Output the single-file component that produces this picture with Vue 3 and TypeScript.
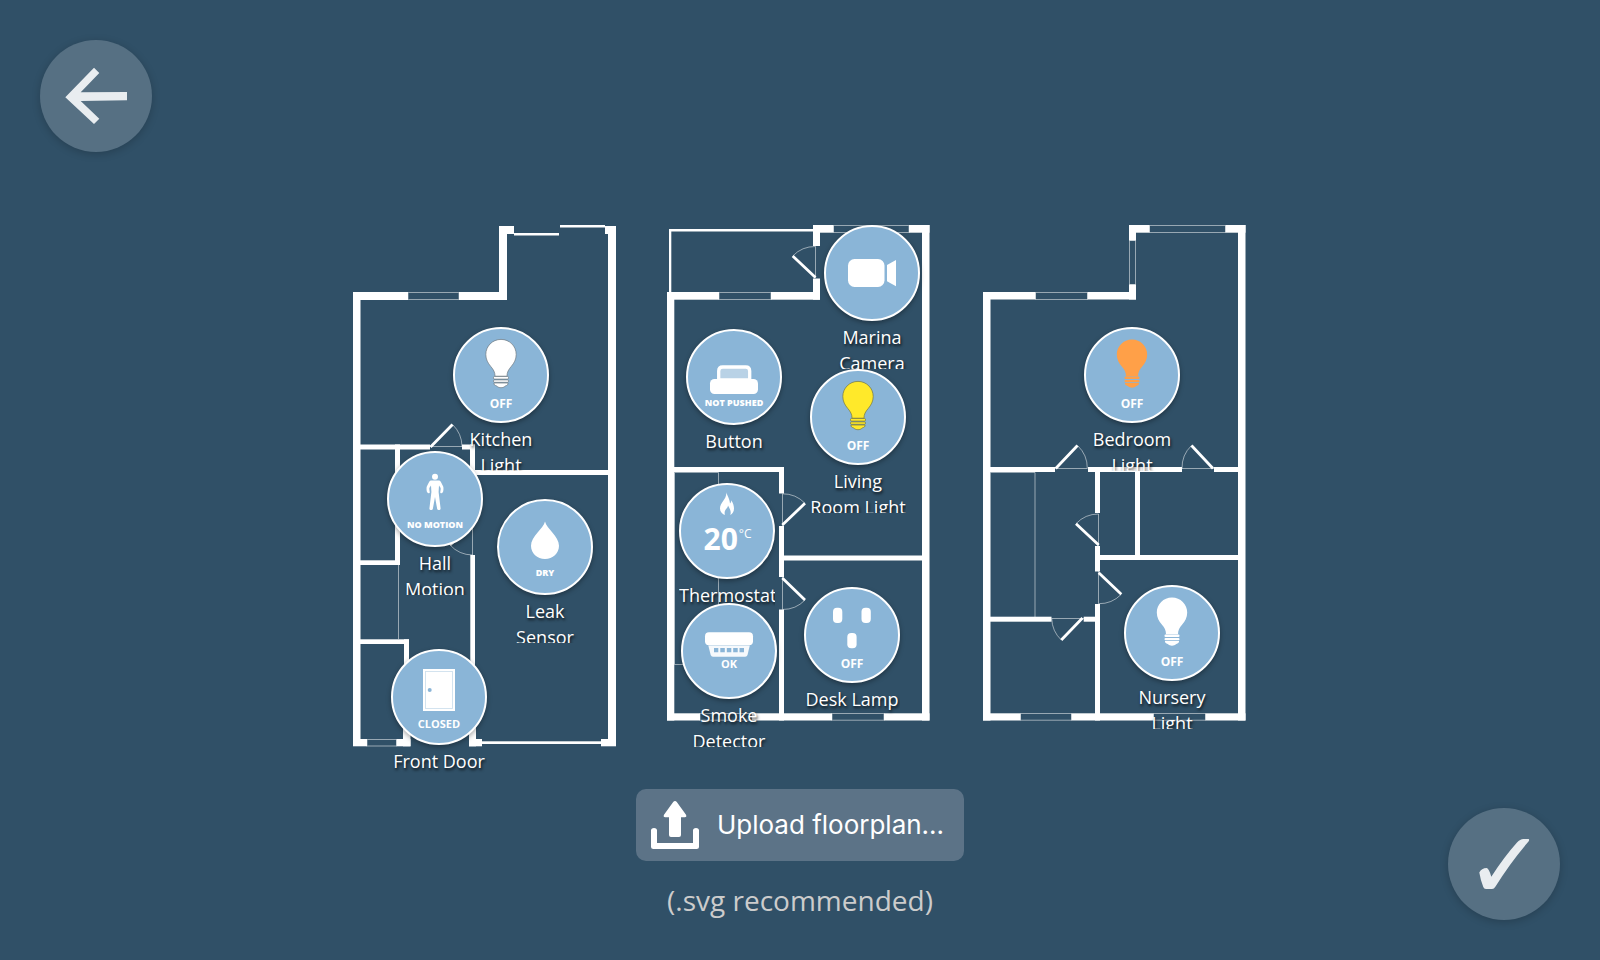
<script setup lang="ts">
type Box = [number, number, number, number]
type IconName = 'bulb' | 'motion' | 'drop' | 'door' | 'camera' | 'button' | 'flame' | 'smoke' | 'outlet'

interface Accessory {
  name: string
  icon: IconName
  x: number
  y: number
  state?: string
  size?: 'large' | 'medium' | 'small' | 'raised'
  fill?: string
  outline?: string
}

// Plan coordinates: origin and extent of the drawing's viewBox.
const plan = { x: 354, y: 225, width: 892, height: 522 }

// Solid walls as [left, top, right, bottom].
const walls: Box[] = [
  // ground floor
  [353, 292, 408, 300], [459, 292, 507, 300], [499, 226, 507, 300], [499, 226, 514, 234],
  [605, 226, 616, 234], [608, 226, 616, 746], [514, 233, 559, 235.5], [560, 225, 605, 227.5],
  [353, 292, 360.5, 746], [360, 444.5, 430, 449.5], [462, 444.5, 475, 449.5],
  [470, 444.5, 475, 475], [470, 470, 616, 475], [395, 444.5, 400, 565], [360, 560.3, 400, 565],
  [360, 639.3, 409, 644], [404, 639.3, 409, 740], [403, 726, 410.5, 746.3],
  [353, 739, 367, 746.3], [396.5, 739, 410.5, 746.3], [470.3, 555, 475, 740],
  [469, 726, 476, 746.3], [469, 739, 482, 746.3], [482, 741.3, 601, 744], [601, 739, 616, 746.3],
  // first floor
  [667, 292, 719, 299.7], [771, 292, 820, 299.7], [667, 292, 674.3, 720.5],
  [669, 229, 671.3, 292], [669, 229, 813, 231.5], [813, 225, 820, 246], [813, 278.5, 820, 299.7],
  [813, 225, 833.5, 232.7], [909, 225, 929.5, 232.7], [922, 225, 929.5, 720.5],
  [674, 467, 784, 472], [779, 467, 784, 493.5], [779, 526, 784, 577], [779, 609.5, 784, 720.5],
  [779, 555.5, 922, 560.5], [667, 713.3, 700, 720.5], [752, 713.3, 832, 720.5],
  [884, 713.3, 929.5, 720.5],
  // second floor
  [983, 292, 1035.5, 299.5], [1087.5, 292, 1136, 299.5], [983, 292, 990.5, 720.5],
  [1129, 225, 1136, 240.5], [1129, 284.5, 1136, 299.5], [1129, 225, 1149.5, 232.7],
  [1225.5, 225, 1245.5, 232.7], [1238, 225, 1245.5, 720.5],
  [990, 467, 1055, 472], [1088, 467, 1182, 472], [1214, 467, 1245, 472],
  [1095, 467, 1100, 513], [1095, 546, 1100, 571.5], [1095, 604, 1100, 720.5],
  [1135, 467, 1140, 560], [1095, 555, 1245, 560], [990, 616.7, 1051.5, 621.7],
  [1083.7, 616.7, 1100, 621.7], [983, 713.3, 1020.5, 720.5], [1071.5, 713.3, 1153.5, 720.5],
  [1205.5, 713.3, 1245.5, 720.5],
]

// Windows are drawn as hairline frames between two wall ends.
const windows: Box[] = [
  [408, 292.5, 459, 299.5], [367, 739.5, 396.5, 746],
  [719, 292.5, 771, 299.5], [833.5, 225.5, 909, 232.5], [700, 713.5, 752, 720.2], [832, 713.5, 884, 720.2],
  [1035.5, 292.5, 1087.5, 299.5], [1149.5, 225.5, 1225.5, 232.5], [1129.5, 240.5, 1135.5, 284.5],
  [1020.5, 713.5, 1071.5, 720.2], [1153.5, 713.5, 1205.5, 720.2],
]

const doorLeaves = [
  'M430.5 447L452.5 424.5', 'M472.5 524L450 545',
  'M815.5 277.5L792.7 256', 'M782.3 525L805 503.3', 'M782.3 578L805 600',
  'M1055.7 468.5L1077.5 445.5', 'M1213 468.5L1191.5 445.5', 'M1098.7 545L1076 523.7',
  'M1098.7 572.7L1121.3 594.3', 'M1082.5 618L1061.3 640',
].join('')

const hairlines = [
  'M430 446.5H462A31 31 0 0 0 452.5 424.5', 'M472.5 475V555A31 31 0 0 1 450 545',
  'M398.5 565V639',
  'M815.5 278V246.5A31 31 0 0 0 792.7 256', 'M782.5 526V493.8A31 31 0 0 1 805 503.3',
  'M782.5 577V609.5A31 31 0 0 0 805 600',
  'M674.5 472.5H718.5V664.5H674.5Z',
  'M1055 468.5H1087.3A31 31 0 0 0 1077.5 445.5', 'M1214 468.5H1182A31 31 0 0 1 1191.5 445.5',
  'M1098.5 546V514A31 31 0 0 0 1076 523.7', 'M1098.5 571V603.7A31 31 0 0 0 1121.3 594.3',
  'M1084 618.5H1051.7A31 31 0 0 0 1061.3 640',
  'M990.5 472.5H1035V617',
].join('')

const accessories: Accessory[] = [
  { name: 'Kitchen Light', icon: 'bulb', x: 501, y: 375, state: 'OFF', size: 'large', fill: '#ffffff', outline: '#6f7880' },
  { name: 'Hall Motion', icon: 'motion', x: 435, y: 499, state: 'NO MOTION', size: 'small' },
  { name: 'Leak Sensor', icon: 'drop', x: 545, y: 547, state: 'DRY', size: 'small' },
  { name: 'Front Door', icon: 'door', x: 439, y: 697, state: 'CLOSED', size: 'medium' },
  { name: 'Marina Camera', icon: 'camera', x: 872, y: 273 },
  { name: 'Button', icon: 'button', x: 734, y: 377, state: 'NOT PUSHED', size: 'small' },
  { name: 'Living Room Light', icon: 'bulb', x: 858, y: 417, state: 'OFF', size: 'large', fill: '#ffe92a', outline: '#77773c' },
  { name: 'Thermostat', icon: 'flame', x: 727, y: 531 },
  { name: 'Smoke Detector', icon: 'smoke', x: 729, y: 651, state: 'OK', size: 'raised' },
  { name: 'Desk Lamp', icon: 'outlet', x: 852, y: 635, state: 'OFF', size: 'large' },
  { name: 'Bedroom Light', icon: 'bulb', x: 1132, y: 375, state: 'OFF', size: 'large', fill: '#ffa048' },
  { name: 'Nursery Light', icon: 'bulb', x: 1172, y: 633, state: 'OFF', size: 'large', fill: '#ffffff' },
]

const place = (a: Accessory) => ({
  left: `${((a.x - plan.x) / plan.width) * 100}%`,
  top: `${((a.y - plan.y) / plan.height) * 100}%`,
})
</script>

<template>
  <main class="page">
    <button class="round back" type="button" aria-label="Back">
      <svg viewBox="0 0 112 112" aria-hidden="true">
        <path d="M25.3 57.3L54 27.7L59.3 33L40.7 52.3L87 52V60.3L40.7 61L59.3 78.7L54 84Z" />
      </svg>
    </button>

    <section class="content">
      <div class="plan">
        <svg class="drawing" :viewBox="`${plan.x} ${plan.y} ${plan.width} ${plan.height}`" aria-hidden="true">
          <path class="hairline" :d="hairlines" />
          <rect
            v-for="(w, i) in windows" :key="`window-${i}`" class="hairline"
            :x="w[0]" :y="w[1]" :width="w[2] - w[0]" :height="w[3] - w[1]"
          />
          <rect
            v-for="(w, i) in walls" :key="`wall-${i}`" class="wall"
            :x="w[0]" :y="w[1]" :width="w[2] - w[0]" :height="w[3] - w[1]"
          />
          <path class="leaf" :d="doorLeaves" />
        </svg>

        <div v-for="a in accessories" :key="a.name" class="accessory" :style="place(a)">
          <button class="disc" type="button" :aria-label="a.name">
            <svg class="icon" viewBox="2 2 92 92" aria-hidden="true">
              <g v-if="a.icon === 'bulb'" :fill="a.fill" :stroke="a.outline ?? 'none'" stroke-width="0.7">
                <path d="M48 12.4C39.400 12.400 32.800 19.200 32.800 27.500C32.800 32.500 35 36.200 37.800 39.500C40.500 42.700 42 45.200 42 49.200H54C54 45.200 55.500 42.700 58.200 39.500C61 36.200 63.200 32.500 63.200 27.500C63.200 19.200 56.600 12.400 48 12.400Z" />
                <rect x="40.500" y="49.500" width="15" height="2.600" rx="1" />
                <rect x="40.500" y="52.900" width="15" height="2.400" rx="1" />
                <path d="M41 56H55C55.500 57.600 54 58.400 52.300 59C51 60.300 49.600 60.700 48 60.700S45 60.300 43.700 59C42 58.400 40.500 57.600 41 56Z" />
              </g>
              <g v-else-if="a.icon === 'motion'" fill="#fff">
                <circle cx="48" cy="25.700" r="3" />
                <path d="M44.500 29.500H51.500C52.500 29.500 53.200 30 53.800 30.800L56.200 35.500C56.700 37 56.500 40 55.800 41.300C55 42.600 53.300 42.500 53.200 41.200C53.400 39.500 54 38 53.500 36.800L52 34.500L51.600 41L53.600 57.500C53.600 59.300 50.800 59.700 50.200 58L48 46L45.800 58C45.200 59.700 42.400 59.300 42.400 57.500L44.400 41L44 34.500L42.500 36.800C42 38 42.600 39.500 42.800 41.200C42.700 42.500 41 42.600 40.200 41.300C39.500 40 39.300 37 39.800 35.500L42.200 30.800C42.800 30 43.500 29.500 44.500 29.500Z" />
              </g>
              <path v-else-if="a.icon === 'drop'" fill="#fff" d="M48 22.500C49.500 29.500 62 37.500 62 46.800C62 54.200 55.800 60 48 60S34 54.200 34 46.800C34 37.500 46.500 29.500 48 22.500Z" />
              <g v-else-if="a.icon === 'door'">
                <rect x="32" y="20" width="32" height="42" fill="#fff" />
                <rect x="34.500" y="22.500" width="27" height="37" fill="none" stroke="#cfe0ee" stroke-width="0.900" />
                <circle cx="38.700" cy="41" r="2" fill="#8ab5d7" />
              </g>
              <g v-else-if="a.icon === 'camera'" fill="#fff">
                <rect x="24" y="34" width="36.500" height="28" rx="6.500" />
                <path d="M63 40L72 35V61.300L63 56.300Z" />
              </g>
              <g v-else-if="a.icon === 'button'" fill="#fff">
                <path d="M32.700 51V42Q32.700 38 36.700 38H59.700Q63.700 38 63.700 42V51Z" fill="#b9d2e6" stroke="#fff" stroke-width="3.300" />
                <rect x="24" y="50" width="48" height="15" rx="4.500" />
              </g>
              <path v-else-if="a.icon === 'flame'" fill="#fff" d="M47.300 9C47.700 12 50.500 15 51 20.500C52 19.800 52.200 18.500 52.200 17.300C54 20 55 22.800 55 25.500C55 28.600 53.500 31 51.200 32C52.200 30 51.800 27 49 22.500C48.800 24.300 48 25 47.300 25.800C45.700 27.600 45.200 30 46 32C43 31 41 28.800 41 25.500C41 19.500 48 16.500 47.300 9Z" />
              <g v-else-if="a.icon === 'smoke'" fill="#fff">
                <path d="M27.300 42.500H68.800L66.500 52Q66 53.700 64.200 53.700H32Q30.200 53.700 29.700 52Z" opacity="0.920" />
                <rect x="24" y="29.300" width="48" height="12.900" rx="4" />
                <path fill="#8ab5d7" d="M33 45h4.300v4.200h-4.300ZM39.300 45h4.500v4.200h-4.500ZM45.800 45h4.500v4.200h-4.500ZM52.200 45h4.500v4.200h-4.500ZM58.500 45h4.500v4.200h-4.500Z" />
              </g>
              <g v-else fill="#fff">
                <rect x="29" y="20.700" width="9.300" height="15.200" rx="4" />
                <rect x="57.500" y="20.700" width="9.300" height="15.200" rx="4" />
                <rect x="43.300" y="46" width="9.300" height="15.300" rx="4" />
              </g>
            </svg>
            <span v-if="a.state" class="state" :class="a.size">{{ a.state }}</span>
            <span v-if="a.icon === 'flame'" class="reading">20<sup>°C</sup></span>
          </button>
          <span class="name">{{ a.name }}</span>
        </div>
      </div>

      <button class="upload" type="button">
        <svg viewBox="0 0 48 48" aria-hidden="true">
          <path d="M24 0Q25 0 25.800 1L35 13.800Q36 16.300 33.800 16.300H30V34Q30 36 28 36H20Q18 36 18 34V16.300H14.200Q12 16.300 13 13.800L22.200 1Q23 0 24 0Z" />
          <path d="M0 29.500Q0 27 3 27T6 29.500V42H42V29.500Q42 27 45 27T48 29.500V45.500Q48 48 45.500 48H2.500Q0 48 0 45.500Z" />
        </svg>
        <span>Upload floorplan...</span>
      </button>
      <p class="hint">(.svg recommended)</p>
    </section>

    <button class="round confirm" type="button" aria-label="Confirm">
      <svg viewBox="0 0 112 112" aria-hidden="true">
        <path d="M31.300 64.500Q33.500 60 38.700 60Q41 60.500 43.300 68.700Q56 49 69 34.500Q72 31 75.500 31H80.500Q81.700 31.500 80.700 33.200Q62 55 47.500 78.500Q46 81 44 81H38Q36 81 35.300 79Q32.500 72 31.300 64.500Z" />
      </svg>
    </button>
  </main>
</template>

<style>
body {
  margin: 0;
  background: #305067;
}
</style>

<style scoped>
.page {
  box-sizing: border-box;
  display: grid;
  grid-template-columns: auto minmax(0, 1fr) auto;
  min-height: 100vh;
  padding: 40px;
  background: #305067;
  color: #fff;
  font-family: "Open Sans", "Noto Sans", sans-serif;
}

button {
  padding: 0;
  border: 0;
  color: inherit;
  font-family: inherit;
  cursor: pointer;
}

.round {
  width: 112px;
  height: 112px;
  border-radius: 50%;
  background: #567083;
  box-shadow: 0 2px 8px rgba(0, 0, 0, 0.2);
}

.round svg {
  display: block;
  width: 112px;
  height: 112px;
  fill: #e9edf0;
}

.back {
  align-self: start;
}

.confirm {
  align-self: end;
}

.content {
  display: flex;
  flex-direction: column;
  align-items: center;
  padding-top: 185px;
}

.plan {
  position: relative;
  width: 100%;
  max-width: 892px;
}

.drawing {
  display: block;
  width: 100%;
  overflow: visible;
}

.wall {
  fill: #fff;
}

.leaf {
  fill: none;
  stroke: #fff;
  stroke-width: 2.8;
}

.hairline {
  fill: none;
  stroke: #fff;
  stroke-width: 1;
  opacity: 0.5;
}

.accessory {
  position: absolute;
  width: 96px;
  height: 144px;
  margin: -48px 0 0 -48px;
}

.disc {
  box-sizing: border-box;
  display: grid;
  justify-items: center;
  align-items: start;
  width: 96px;
  height: 96px;
  border: 2px solid #fff;
  border-radius: 50%;
  background: #8ab5d7;
  box-shadow: 0 2px 5px rgba(0, 0, 0, 0.35);
}

.icon,
.state,
.reading {
  grid-area: 1 / 1;
}

.icon {
  width: 92px;
  height: 92px;
}

.state {
  font-weight: 700;
  line-height: 16px;
  white-space: nowrap;
}

.large {
  padding-top: 67px;
  font-size: 12px;
}

.medium {
  padding-top: 65px;
  font-size: 11px;
}

.small {
  padding-top: 64px;
  font-size: 9px;
  font-weight: 800;
}

.raised {
  padding-top: 51px;
  font-size: 11px;
}

.reading {
  display: flex;
  align-items: flex-start;
  gap: 1px;
  padding: 34px 0 0 1px;
  font-size: 30px;
  font-weight: 700;
  line-height: 40px;
}

.reading sup {
  font-size: 12px;
  font-weight: 500;
  line-height: 30px;
}

.name {
  box-sizing: border-box;
  display: block;
  height: 48px;
  padding-top: 3px;
  overflow: hidden;
  font-size: 18px;
  font-weight: 500;
  line-height: 26px;
  text-align: center;
  text-shadow: 1px 2px 3px rgba(0, 0, 0, 0.8);
}

.upload {
  display: flex;
  align-items: center;
  gap: 18px;
  margin-top: 42px;
  padding: 12px 20px 12px 15px;
  border-radius: 10px;
  background: #5c7387;
  font-family: Inter, "Liberation Sans", sans-serif;
  font-size: 26px;
  font-weight: 400;
  line-height: 48px;
}

.upload svg {
  width: 48px;
  height: 48px;
  fill: #fff;
}

.hint {
  margin: 19px 0 0;
  color: #ccc;
  font-size: 28px;
  line-height: 40px;
}
</style>
